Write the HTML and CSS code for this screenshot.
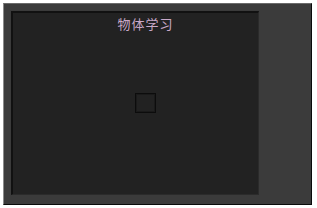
FILE: index.html
```html
<!DOCTYPE html>
<html lang="zh">
<head>
    <meta charset="UTF-8">
    <meta name="viewport" content="width=device-width, initial-scale=1.0">
    <title>物体学习</title>
    <link rel="stylesheet" href="styles.css">
</head>
<body>
    <div class="frame">
        <div class="panel">
            <h1 class="title">物体学习</h1>
            <div class="target-box"></div>
        </div>
    </div>
</body>
</html>
```

FILE: styles.css
```css
* {
    margin: 0;
    padding: 0;
    box-sizing: border-box;
}

body {
    font-family: "Noto Sans CJK SC", "Noto Sans", sans-serif;
    background-color: #ffffff;
}

.frame {
    width: 309px;
    height: 202px;
    margin: 3px;
    padding: 7px;
    background-color: #3b3b3b;
    border-top: 1px solid #6a6a6a;
    border-left: 1px solid #8a8a8a;
    border-right: 1px solid #0a0a0a;
    border-bottom: 1px solid #0a0a0a;
}

.panel {
    width: 248px;
    height: 184px;
    display: flex;
    flex-direction: column;
    align-items: center;
    padding-left: 20px;
    background-color: #222222;
    border-top: 2px solid #111111;
    border-left: 2px solid #111111;
    border-right: 1px solid #2b2b2b;
    border-bottom: 1px solid #2b2b2b;
}

.title {
    margin-top: 3px;
    font-size: 13px;
    font-weight: normal;
    line-height: 16px;
    letter-spacing: 1px;
    color: #c9a9c9;
}

.target-box {
    width: 21px;
    height: 20px;
    margin-top: 61px;
    border: 1px solid #0c0c0c;
    box-shadow: inset 0 0 0 1px #1a1a1a;
}
```
